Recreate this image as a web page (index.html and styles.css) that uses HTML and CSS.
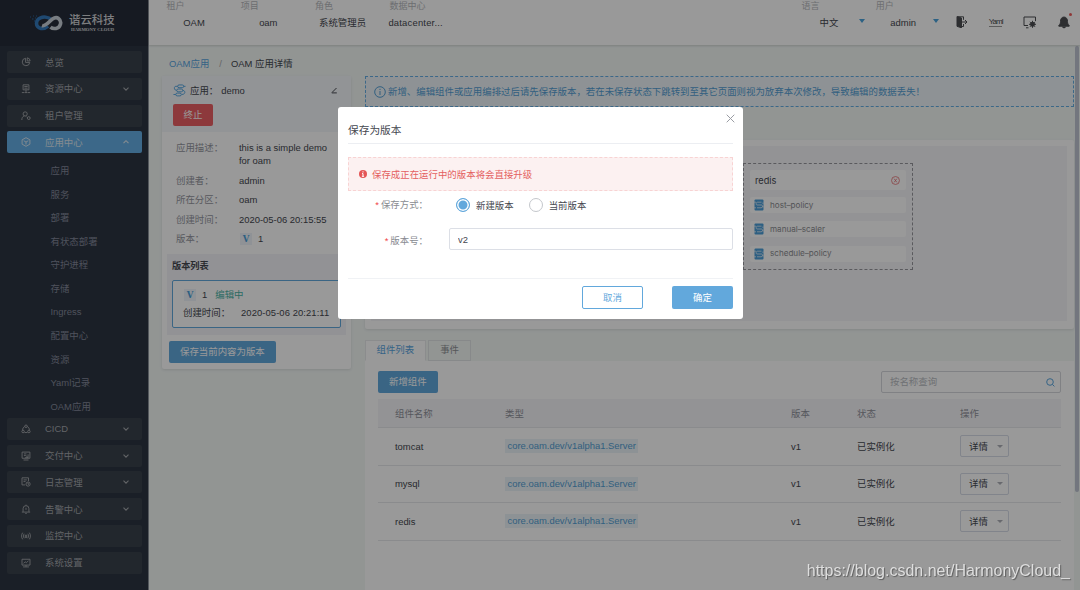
FILE: index.html
```html
<!doctype html>
<html lang="zh-CN">
  <head>
    <meta charset="UTF-8" />
    <meta name="viewport" content="width=device-width, initial-scale=1.0" />
    <title>OAM 应用详情</title>
    <link rel="stylesheet" href="styles.css">
  </head>
  <body>
    <svg class="defs" width="0" height="0">
      <symbol id="down" viewBox="0 0 8 8"><path d="M1.5 2.7 4 5.2 6.5 2.7" /></symbol>
      <symbol id="up" viewBox="0 0 8 8"><path d="M1.5 5.2 4 2.7 6.5 5.2" /></symbol>
      <symbol id="flow" viewBox="0 0 14 14">
        <rect x="5" y="1" width="6.5" height="3" rx="1.5" />
        <rect x="4" y="5.4" width="6.5" height="3" rx="1.5" />
        <rect x="3" y="9.8" width="6" height="3" rx="1.5" />
        <path d="M5 2.5H3C.8 2.5.8 6.9 4 6.9M10.5 6.9c3.2 0 3.2 4.4-1 4.4M11.5 2.5h2M.5 11.3H3" />
      </symbol>
      <symbol id="trait" viewBox="0 0 10 12">
        <rect class="fill" x=".5" y=".5" width="9" height="11" rx="1" />
        <path class="line" d="M3.5 3.2h4M3 8.8h4M3 6h4.5M0 3.2h2M0 8.8h2M3.5 3.2c-1.7 0-1.7 2.8-.5 2.8M7.5 6c1.5 0 1.5 2.8-.5 2.8M9 3.5V5M9 7v1.5" />
      </symbol>
    </svg>

    <div class="layout">
      <aside class="sidebar">
        <div class="logo">
          <svg width="33" height="19" viewBox="0 0 33 19">
            <path class="logo-blue" d="M21.5 5.8C18 2.5 13 2.8 10.5 3.8c-5.500 2.300-5.300 9.300.5 10.600 3 .6 5-.6 7-2.300" />
            <path class="logo-white" d="M12 11.500c2 .8 3.500-.5 5-1.700L22.500 5c2-1.500 4.500-1.700 6-.5 4 3 2 9-2.500 9.900-2 .4-4 0-5.500-1.300" />
            <path class="logo-dust" d="M0 3h1M3 2h1M2 5h1.500M5 4h1M4 7h1.500M6 2h1" />
          </svg>
          <div class="logo-text">
            <div class="logo-cn">谐云科技</div>
            <div class="logo-en">HARMONY CLOUD</div>
          </div>
        </div>
        <nav>
          <a class="menu"><svg viewBox="0 0 12 12"><path d="M5.500 1.500a4.500 4.500 0 1 0 5 5H5.500zM7.500 1a4 4 0 0 1 3.500 3.700H7.500z" /></svg><span>总览</span></a>
          <a class="menu"><svg viewBox="0 0 12 12"><path d="M2.500 1h7v6h-7zM4 3h4M4 5h4M6 7v3M1 10.300h3M8 10.300h3M4.500 10.300h3" /></svg><span>资源中心</span><svg class="arrow"><use href="#down" /></svg></a>
          <a class="menu"><svg viewBox="0 0 12 12"><circle cx="5" cy="3.500" r="2.500" /><path d="M1 10.800C1 8 2 6.500 4 6M6 6.500l1 1" /><circle cx="9.300" cy="8.500" r="1.700" /></svg><span>租户管理</span></a>
          <a class="menu active"><svg viewBox="0 0 12 12"><path d="m6 .8 4.700 2.600v5.200L6 11.200 1.300 8.600V3.400zM3.300 4.500 6 6l2.700-1.500M6 6v3" /></svg><span>应用中心</span><svg class="arrow"><use href="#up" /></svg></a>
          <div class="submenu">
            <a>应用</a>
            <a>服务</a>
            <a>部署</a>
            <a>有状态部署</a>
            <a>守护进程</a>
            <a>存储</a>
            <a>Ingress</a>
            <a>配置中心</a>
            <a>资源</a>
            <a>Yaml记录</a>
            <a>OAM应用</a>
          </div>
          <a class="menu"><svg viewBox="0 0 12 12"><circle cx="6" cy="2.700" r="1.500" /><circle cx="2.500" cy="9" r="1.500" /><circle cx="9.500" cy="9" r="1.500" /><path d="M4.500 3C2.500 4 2 5.500 2 7.300M7.500 3c2 1 2.500 2.500 2.500 4.300M4.200 10q1.800.7 3.600 0" /></svg><span>CICD</span><svg class="arrow"><use href="#down" /></svg></a>
          <a class="menu"><svg viewBox="0 0 12 12"><path d="M1.300 1.300h9.400v7.400H1.300zM3 10.800h6M3.500 3.500h3M3.500 5.500h2M5.500 5l3 3M8.500 4v4H5" /></svg><span>交付中心</span><svg class="arrow"><use href="#down" /></svg></a>
          <a class="menu"><svg viewBox="0 0 12 12"><path d="M5 9.500H1.200v-8.500H9V5M3 3.500h4M3 5.500h2.500" /><circle cx="8.500" cy="8.500" r="2.500" /><path d="M8.500 7v1.700h1.200" /></svg><span>日志管理</span><svg class="arrow"><use href="#down" /></svg></a>
          <a class="menu"><svg viewBox="0 0 12 12"><path d="M2.500 9.500V5.500a3.500 3.500 0 0 1 7 0v4M1 9.700h10M5 11.200h2M6 .8V2M6 4.500v2.500" /></svg><span>告警中心</span><svg class="arrow"><use href="#down" /></svg></a>
          <a class="menu"><svg viewBox="0 0 12 12"><path d="M2 2C.3 4 .3 8 2 10M10 2c1.700 2 1.700 6 0 8M3.800 3.300c-1 1.700-1 3.700 0 5.400M8.200 3.300c1 1.700 1 3.700 0 5.400M5.200 8.500V5h1.600v3.500" /></svg><span>监控中心</span></a>
          <a class="menu"><svg viewBox="0 0 12 12"><path d="M1.200 1.500h9.600v7H1.200zM2.500 10.700h7M3 6.500 5 4.500l1.500 1.200L9 3.200M6 8.500v2" /></svg><span>系统设置</span></a>
        </nav>
      </aside>

      <div class="page">
        <header class="topbar">
          <div class="pick"><label>租户</label><div>OAM</div></div>
          <div class="pick"><label>项目</label><div>oam</div></div>
          <div class="pick"><label>角色</label><div>系统管理员</div></div>
          <div class="pick"><label>数据中心</label><div class="wide">datacenter...</div></div>
          <div class="topbar-right">
            <div class="pick caret"><label>语言</label><div>中文</div></div>
            <div class="pick caret"><label>用户</label><div>admin</div></div>
            <div class="tools">
              <svg width="12" height="12" viewBox="0 0 12 12"><path class="solid" d="M1 .5 5.500 2v9.800L1 10.300z" /><path d="M2 .8h5.500v3M7.500 8v2.500H5M6 6h5M9 4l2 2-2 2" /></svg>
              <span class="yaml">Yaml</span>
              <svg width="14" height="13" viewBox="0 0 14 13"><path d="M5 9.500H1V1h11.500v4M3 11.800h2.500" /><circle class="solid" cx="9.500" cy="8.300" r="2" /><path d="M9.500 4.800v7M6 8.300h7M7 5.800l5 5M12 5.800l-5 5" /></svg>
              <span class="bell">
                <svg width="12" height="13" viewBox="0 0 12 13"><path class="solid" d="M6 1c-2.600.3-3.500 2-3.500 4.500 0 2-.6 3-1.700 4v.7h10.400v-.7c-1.100-1-1.700-2-1.700-4C9.500 3 8.600 1.300 6 1zM4.500 11h3Q6 13 4.500 11z" /></svg>
                <i class="dot"></i>
              </span>
            </div>
          </div>
        </header>

        <main class="content">
          <div class="breadcrumb"><a>OAM应用</a><i>/</i><span>OAM 应用详情</span></div>
          <div class="columns">
            <section class="card detail">
              <div class="detail-head">
                <div class="app-name">
                  <svg class="flow" width="13" height="13"><use href="#flow" /></svg>
                  <span>应用：</span><span class="name">demo</span>
                  <svg class="edit" width="7" height="7" viewBox="0 0 7 7"><path d="M1 5.500 5.500 1M.8 5.900h5" /></svg>
                </div>
                <button class="btn danger">终止</button>
              </div>
              <dl class="info">
                <dt>应用描述：</dt><dd>this is a simple demo for oam</dd>
                <dt>创建者：</dt><dd>admin</dd>
                <dt>所在分区：</dt><dd>oam</dd>
                <dt>创建时间：</dt><dd>2020-05-06 20:15:55</dd>
                <dt>版本：</dt><dd><b class="v">V</b>1</dd>
              </dl>
              <div class="versions">
                <h4>版本列表</h4>
                <div class="version">
                  <div><b class="v">V</b>1<span class="editing">编辑中</span></div>
                  <div class="version-time"><span>创建时间：</span><span>2020-05-06 20:21:11</span></div>
                </div>
              </div>
              <button class="btn primary save">保存当前内容为版本</button>
            </section>

            <div class="right">
              <div class="notice">
                <svg width="12" height="12" viewBox="0 0 12 12"><circle cx="6" cy="6" r="5.300" /><path d="M6 5v4M6 2.800v1.200" /></svg>
                新增、编辑组件或应用编排过后请先保存版本，若在未保存状态下跳转到至其它页面则视为放弃本次修改，导致编辑的数据丢失！
              </div>
              <section class="card board">
                <div class="canvas">
                  <div class="node">
                    <div class="node-title">redis<svg width="9" height="9" viewBox="0 0 10 10"><circle cx="5" cy="5" r="4.400" /><path d="m3.500 3 3 4M6.500 3l-3 4" /></svg></div>
                    <div class="trait"><svg><use href="#trait" /></svg>host–policy</div>
                    <div class="trait"><svg><use href="#trait" /></svg>manual–scaler</div>
                    <div class="trait"><svg><use href="#trait" /></svg>schedule–policy</div>
                  </div>
                </div>
              </section>
              <div class="tabs"><a class="tab on">组件列表</a><a class="tab">事件</a></div>
              <section class="list">
                <div class="list-bar">
                  <button class="btn primary">新增组件</button>
                  <div class="search">按名称查询<svg width="9" height="9" viewBox="0 0 9 9"><circle cx="4" cy="4" r="3.300" /><path d="m6.400 6.400 2 2" /></svg></div>
                </div>
                <div class="row head"><span>组件名称</span><span>类型</span><span>版本</span><span>状态</span><span>操作</span></div>
                <div class="row"><span>tomcat</span><span><em class="tag">core.oam.dev/v1alpha1.Server</em></span><span>v1</span><span>已实例化</span><span><button class="more">详情</button></span></div>
                <div class="row"><span>mysql</span><span><em class="tag">core.oam.dev/v1alpha1.Server</em></span><span>v1</span><span>已实例化</span><span><button class="more">详情</button></span></div>
                <div class="row"><span>redis</span><span><em class="tag">core.oam.dev/v1alpha1.Server</em></span><span>v1</span><span>已实例化</span><span><button class="more">详情</button></span></div>
              </section>
            </div>
          </div>
          <div class="scrollbar"></div>
        </main>
      </div>
    </div>

    <div class="mask">
      <div class="dialog">
        <svg class="close" width="9" height="9" viewBox="0 0 9 9"><path d="m.7.7 7.600 7.600M8.300.7.700 8.300" /></svg>
        <h3>保存为版本</h3>
        <div class="warning">
          <svg width="8" height="8" viewBox="0 0 8 8"><circle cx="4" cy="4" r="4" /><path d="M4 1.300v1.200M3 3.600h1v2.700M2.900 6.300h2.200" /></svg>
          保存成正在运行中的版本将会直接升级
        </div>
        <div class="field method">
          <div class="label"><i>*</i>保存方式：</div>
          <div class="radio checked">新建版本</div>
          <div class="radio">当前版本</div>
        </div>
        <div class="field number">
          <div class="label"><i>*</i>版本号：</div>
          <input type="text" value="v2" />
        </div>
        <div class="dialog-foot">
          <button class="btn plain">取消</button>
          <button class="btn primary">确定</button>
        </div>
      </div>
    </div>
    <div class="watermark">https://blog.csdn.net/HarmonyCloud_</div>
  </body>
</html>
```

FILE: styles.css
```css
* {
  box-sizing: border-box;
}
body {
  margin: 0;
  height: 590px;
  overflow: hidden;
  font-family: "Liberation Sans", "Noto Sans CJK SC", sans-serif;
  font-size: 9.44px;
  line-height: 13px;
  color: #45484f;
}
svg {
  fill: none;
  stroke: currentColor;
  flex: none;
}
.defs {
  position: absolute;
}
button,
input {
  font: inherit;
}
i,
em {
  font-style: normal;
}
.layout {
  display: flex;
  height: 590px;
}

/* sidebar */
.sidebar {
  width: 149px;
  flex: none;
  background: #2c3441;
  border-right: 1px solid #8d939b;
}
.logo {
  height: 46px;
  background: #262c39;
  display: flex;
  align-items: center;
  padding: 1px 0 0 30px;
}
.logo svg {
  stroke-width: 3.6;
}
.logo-blue {
  stroke: #347abd;
}
.logo-white {
  stroke: #c9d0d9;
}
.logo-dust {
  stroke: #28629b;
  stroke-width: 1;
}
.logo-text {
  margin-left: 6px;
  color: #d0d2d6;
}
.logo-cn {
  font-size: 11.4px;
  font-weight: 500;
  line-height: 13px;
}
.logo-en {
  font-family: "Liberation Serif", serif;
  font-size: 4.7px;
  font-weight: bold;
  line-height: 6px;
  white-space: nowrap;
  margin-left: 2px;
}
nav {
  padding: 5px 6.5px 0 7px;
}
.menu {
  display: flex;
  align-items: center;
  height: 22px;
  margin-bottom: 4.8px;
  padding-left: 14px;
  border-radius: 2px;
  background: #39414b;
  color: #a3a6ab;
}
.menu svg {
  width: 10px;
  height: 10px;
  stroke-width: 1.1;
}
.menu span {
  margin-left: 14px;
}
.menu .arrow {
  width: 8px;
  height: 8px;
  margin: 0 12px 0 auto;
}
.menu.active {
  background: #65aee4;
  color: #dce8f1;
}
.submenu {
  margin-bottom: 0.5px;
}
.submenu a {
  display: block;
  height: 23.55px;
  line-height: 25.5px;
  padding-left: 43.5px;
  color: #83889a;
}

/* top bar */
.page {
  flex: 1;
  min-width: 0;
  display: flex;
  flex-direction: column;
}
.topbar {
  height: 45px;
  background: #fff;
  box-shadow: 0 1px 2px rgba(0, 0, 0, 0.15);
  display: flex;
  padding-left: 17.5px;
  z-index: 1;
}
.pick {
  width: 74.3px;
}
.pick label {
  display: block;
  font-size: 9px;
  color: #b6b8bc;
}
.pick div {
  width: 55px;
  margin-top: 3px;
  text-align: center;
  white-space: nowrap;
}
.pick .wide {
  width: 54px;
  margin-left: -1px;
  letter-spacing: 0.2px;
}
.topbar-right {
  display: flex;
  margin-left: auto;
}
.caret {
  position: relative;
}
.caret::after {
  content: "";
  position: absolute;
  left: 57.5px;
  top: 19px;
  border: 3.5px solid transparent;
  border-top: 4px solid #4ba3dc;
  border-bottom: 0;
}
.tools {
  display: flex;
  align-items: center;
  justify-content: space-between;
  width: 114px;
  height: 44px;
  margin: 0 10px 0 6px;
  color: #4b4d51;
}
.solid {
  fill: currentColor;
}
.yaml {
  font-size: 8px;
  letter-spacing: -1px;
  line-height: 8px;
  border-bottom: 1px solid #999;
}
.bell {
  position: relative;
  line-height: 0;
}
.dot {
  position: absolute;
  right: -2px;
  top: -3px;
  width: 3px;
  height: 3px;
  border-radius: 50%;
  background: #ed5c5c;
}

/* content */
.content {
  position: relative;
  flex: 1;
  background: #f3f8f6;
  padding: 12px 6px 0 13px;
}
.breadcrumb {
  height: 19px;
  line-height: 14px;
  padding-left: 7px;
}
.breadcrumb a {
  color: #59a6df;
}
.breadcrumb i {
  margin: 0 9px 0 10px;
  color: #aaa;
}
.columns {
  display: flex;
  align-items: flex-start;
}
.card {
  background: #fff;
  border-radius: 2px;
  box-shadow: 0 1px 3px rgba(0, 0, 0, 0.1);
}
.btn {
  display: block;
  height: 22px;
  padding: 0 10px;
  border: 1px solid transparent;
  border-radius: 2px;
  line-height: 20px;
  white-space: nowrap;
  color: #fff;
}
.primary {
  background: #62a8dc;
}
.danger {
  width: 40px;
  padding: 0;
  background: #eb6064;
}
.plain {
  background: #fff;
  border-color: #62a8dc;
  color: #62a8dc;
}
.detail {
  width: 189px;
  height: 293px;
  margin-right: 14px;
}
.detail-head {
  height: 56px;
  padding: 7px 11px 0;
  background: #f4f7fb;
}
.app-name {
  display: flex;
  align-items: center;
  height: 14px;
  margin-bottom: 6.5px;
}
.flow {
  color: #4ea2df;
  margin-right: 4px;
}
.name {
  margin-left: 3px;
}
.edit {
  margin-left: auto;
  margin-right: 2px;
}
.info {
  display: grid;
  grid-template-columns: 63px 95px;
  row-gap: 6.5px;
  margin: 9px 0 0 14px;
}
.info dt {
  color: #9496a0;
  white-space: nowrap;
}
.info dd {
  margin: 0;
}
.v {
  display: inline-block;
  width: 12px;
  height: 12px;
  line-height: 13px;
  margin: 0 6px 0 1px;
  text-align: center;
  font-family: "DejaVu Serif", serif;
  font-size: 8.5px;
  background: #eff4fa;
  color: #4c9fd8;
}
.versions {
  height: 81px;
  margin: 9px 5px 6px;
  padding: 6px 5px;
  background: #f4f4f8;
}
.versions h4 {
  margin: 0 0 7px;
  font-size: 9.2px;
}
.version {
  height: 48px;
  padding: 7px 0 0 10px;
  border: 1px solid #62a8dc;
  border-radius: 2px;
  background: #fff;
}
.editing {
  margin-left: 8px;
  color: #4bb3a6;
}
.version-time {
  display: flex;
  margin-top: 5px;
  white-space: nowrap;
}
.version-time span:first-child {
  width: 58px;
}
.version-time span:last-child {
  letter-spacing: 0.08px;
}
.save {
  margin-left: 7px;
}
.right {
  flex: 1;
  min-width: 0;
}
.notice {
  display: flex;
  align-items: center;
  height: 31px;
  padding-left: 8px;
  border: 1px dashed #64ade3;
  background: #edf4f9;
  color: #549fd5;
  white-space: nowrap;
}
.notice svg {
  margin-right: 2px;
}
.board {
  height: 189px;
  margin-top: 33px;
  padding: 6px 7px 8px 6px;
}
.canvas {
  position: relative;
  height: 175px;
  background: #f6f6f9;
}
.node {
  position: absolute;
  left: 372px;
  top: 17px;
  width: 170px;
  height: 107px;
  padding: 6px;
  border: 1px dashed #97979d;
  font-family: Inter, sans-serif;
}
.node-title {
  display: flex;
  align-items: center;
  justify-content: space-between;
  height: 20px;
  padding: 0 6px 0 5px;
  border-radius: 2px;
  background: #fff;
  font-size: 9.2px;
}
.node-title svg {
  color: #e77174;
  stroke-width: 0.9;
}
.trait {
  display: flex;
  align-items: center;
  height: 16px;
  margin-top: 8.4px;
  padding-left: 4px;
  border-radius: 2px;
  background: #fff;
  font-size: 8.1px;
  color: #8b8c91;
}
.node-title + .trait {
  margin-top: 7px;
}
.trait svg {
  width: 10px;
  height: 12px;
  margin-right: 6px;
}
.fill {
  fill: #4c9fd9;
  stroke: none;
}
.line {
  stroke: #e7f1f9;
  stroke-width: 0.8;
}
.tabs {
  display: flex;
  height: 21px;
  margin-top: 11px;
}
.tab {
  height: 21px;
  margin-right: 2.5px;
  padding: 0 11px;
  border: 1px solid #e2e4e6;
  line-height: 18px;
  color: #8f9195;
}
.tab.on {
  padding: 0 10.5px;
  background: #fff;
  border-color: #e8eaeb;
  border-bottom-color: #fff;
  color: #59a6df;
}
.list {
  height: 229px;
  padding: 10px 13px 0;
  background: #fff;
}
.list-bar {
  display: flex;
  justify-content: space-between;
  height: 28px;
}
.search {
  display: flex;
  align-items: center;
  justify-content: space-between;
  width: 180px;
  height: 22px;
  padding: 0 5px 0 8px;
  border: 1px solid #d5d7dd;
  border-radius: 2px;
  line-height: 20px;
  color: #b9bcc2;
}
.search svg {
  color: #59a6df;
}
.row {
  display: grid;
  grid-template-columns: 110px 286px 66px 103px 1fr;
  align-items: center;
  height: 37.5px;
  padding-left: 17px;
  border-bottom: 1px solid #e6e8ec;
}
.row.head {
  height: 29px;
  background: #f5f5f9;
  color: #90929b;
}
.tag {
  display: inline-block;
  height: 14px;
  line-height: 14px;
  padding: 0 2.5px;
  background: #ebf4f8;
  color: #549fd5;
}
.more {
  display: flex;
  align-items: center;
  justify-content: space-between;
  width: 49px;
  height: 22px;
  padding: 0 5px 0 8px;
  border: 1px solid #d8dce8;
  border-radius: 2px;
  background: #fff;
  color: #45484f;
}
.more::after {
  content: "";
  border: 3px solid transparent;
  border-top-color: #adb0b8;
  border-bottom: 0;
}
.scrollbar {
  position: absolute;
  right: 1px;
  top: 1px;
  width: 4px;
  height: 446px;
  border-radius: 2px;
  background: #c0c5d3;
}

/* dialog */
.mask {
  position: fixed;
  inset: 0;
  z-index: 10;
  background: rgba(0, 0, 0, 0.4);
}
.dialog {
  position: relative;
  width: 405px;
  height: 212px;
  margin: 107px 0 0 338px;
  padding: 16px 10px 0;
  border-radius: 3px;
  background: #fff;
}
.close {
  position: absolute;
  right: 8px;
  top: 7px;
  color: #999ca3;
}
.dialog h3 {
  height: 21px;
  margin: 0;
  border-bottom: 1px solid #eceef2;
  font-size: 10.7px;
  font-weight: normal;
  line-height: 14px;
}
.warning {
  display: flex;
  align-items: center;
  height: 34px;
  margin-top: 13px;
  padding-left: 10px;
  border: 1px dashed #f8d3d3;
  background: #fcf1f1;
  color: #e45f60;
}
.warning svg {
  margin-right: 5px;
  fill: #e45556;
  stroke: none;
}
.warning path {
  fill: none;
  stroke: #fff;
}
.field {
  display: flex;
  align-items: center;
  height: 22px;
}
.method {
  margin-top: 3px;
}
.number {
  margin-top: 12px;
}
.label {
  width: 80px;
  margin-right: 21px;
  text-align: right;
  color: #898b91;
}
.label i {
  margin-right: 2px;
  color: #f04444;
}
.radio {
  display: flex;
  align-items: center;
  margin-right: 15px;
}
.method .label {
  height: 15px;
  margin-right: 28px;
}
.number .label {
  height: 11px;
}
.radio::before {
  content: "";
  width: 12px;
  height: 12px;
  margin-right: 6px;
  border: 1px solid #c4c7cc;
  border-radius: 50%;
}
.radio.checked::before {
  border-color: #62a8dc;
  background: #62a8dc;
  box-shadow: inset 0 0 0 1.5px #fff;
}
.field input {
  width: 284px;
  height: 22px;
  padding: 0 8px;
  border: 1px solid #dcdfe6;
  border-radius: 2px;
  color: #45484f;
}
.dialog-foot {
  display: flex;
  justify-content: flex-end;
  gap: 29px;
  height: 40px;
  margin-top: 28px;
  padding-top: 7px;
  border-top: 1px solid #f0f2f5;
}
.dialog-foot .btn {
  width: 61px;
  height: 23px;
}
.watermark {
  position: fixed;
  right: 10px;
  bottom: 9px;
  z-index: 11;
  font-size: 16px;
  line-height: 20px;
  color: #dedede;
  text-shadow: 1px 1px 1px rgba(0, 0, 0, 0.4);
}
```
